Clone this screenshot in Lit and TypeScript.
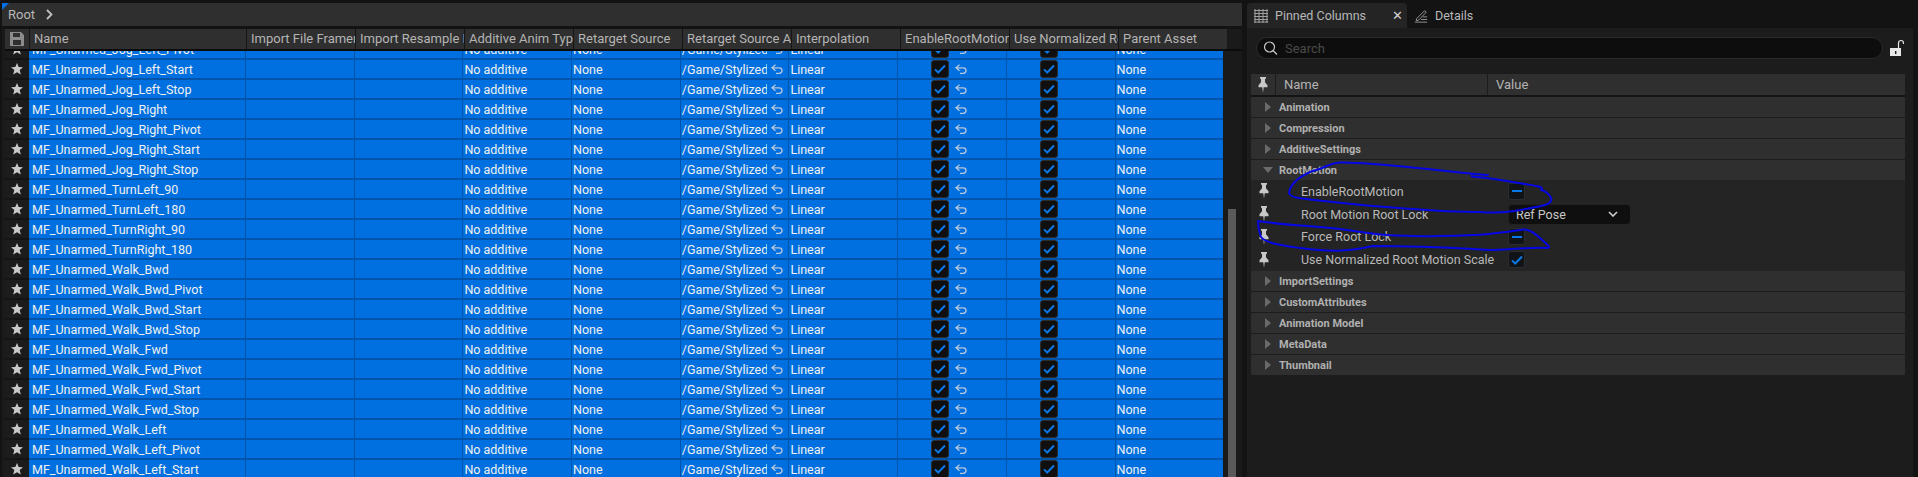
import { LitElement, html, css, svg } from "lit";
import { customElement } from "lit/decorators.js";

const NAMES = [
  "Jog_Left_Pivot","Jog_Left_Start","Jog_Left_Stop","Jog_Right","Jog_Right_Pivot","Jog_Right_Start","Jog_Right_Stop",
  "TurnLeft_90","TurnLeft_180","TurnRight_90","TurnRight_180","Walk_Bwd","Walk_Bwd_Pivot","Walk_Bwd_Start","Walk_Bwd_Stop",
  "Walk_Fwd","Walk_Fwd_Pivot","Walk_Fwd_Start","Walk_Fwd_Stop","Walk_Left","Walk_Left_Pivot","Walk_Left_Start",
].map((n) => "MF_Unarmed_" + n);

const COLS = ["Import File Framerate","Import Resample Framerate","Additive Anim Type","Retarget Source","Retarget Source Asset","Interpolation","EnableRootMotion","Use Normalized Root Motion Scale","Parent Asset"];

const star = html`<svg class="star" viewBox="0 0 12 12"><path d="M6 0 7.7 3.9 12 4.3 8.7 7.1 9.8 11.5 6 9.2 2.2 11.5 3.3 7.1 0 4.3 4.3 3.9Z"/></svg>`;
const revert = html`<svg class="revert" viewBox="0 0 12 10"><path d="M4.5 .8 1 3.8 4.5 6.8M1.2 3.8H8.2a2.8 2.8 0 0 1 0 5.6H5"/></svg>`;
const check = html`<span class="chk"><svg viewBox="0 0 12 10"><path d="M1 5.4 4.2 8.5 11 1.5"/></svg></span>`;
const checkS = html`<span class="chk small"><svg viewBox="0 0 12 10"><path d="M1 5.4 4.2 8.5 11 1.5"/></svg></span>`;
const dash = html`<span class="chk small"><i class="dash"></i></span>`;
const pin = html`<svg class="pin" viewBox="0 0 10 18"><path d="M2 1h6v1.2L7 3.2v3l2.5 3v2H5.7L5 17 4.3 11.2H.5v-2L3 6.2v-3L2 2.2Z"/></svg>`;
const tri = html`<svg class="tri" viewBox="0 0 6 10"><path d="M0 0 6 5 0 10Z"/></svg>`;

@customElement("app-root")
class AppRoot extends LitElement {
  static styles = css`
    :host { display: flex; position: relative; width: 1918px; height: 477px; overflow: hidden; background: #131313; font-family: Roboto, "Liberation Sans", sans-serif; font-size: 12px; color: #c0c0c0; }
    .left { width: 1240px; margin-left: 2px; padding-top: 3px; display: flex; flex-direction: column; flex: none; position: relative; }
    .corner { position: absolute; left: 0; top: 3px; width: 0; height: 0; border-top: 7px solid #0070e0; border-right: 7px solid transparent; }
    .crumb { height: 23px; background: #2f2f2f; display: flex; align-items: center; padding-left: 6px; gap: 11px; font-size: 13px; color: #b8b8b8; flex: none; }
    .crumb svg { width: 7px; height: 11px; fill: none; stroke: #c0c0c0; stroke-width: 1.8; }
    .table { flex: 1; margin-top: 3px; background: #1a1a1a; padding-left: 3px; display: flex; flex-direction: column; min-height: 0; position: relative; }
    .head { display: flex; height: 20px; flex: none; border-bottom: 2px solid #0c0c0c; background: #1a1a1a; }
    .hsave { width: 24px; background: #2f2f2f; display: flex; align-items: center; justify-content: center; flex: none; }
    .hsave svg { width: 14px; height: 14px; fill: #8c8c8c; }
    .hc { width: 109px; flex: none; background: #2f2f2f; border-left: 1px solid #151515; box-sizing: border-box; padding: 0 0 0 4px; line-height: 20px; white-space: nowrap; overflow: hidden; color: #b4b4b4; font-size: 13px; }
    .hc.name { width: 217px; padding-left: 4px; }
    .body { flex: 1; overflow: hidden; min-height: 0; display: flex; }
    .rows { width: 1219px; flex: none; margin-top: -11px; }
    .row { display: flex; height: 20px; }
    .starc { width: 24px; flex: none; background: #1c1c1c; border-bottom: 2px solid #141414; box-sizing: border-box; display: flex; align-items: center; justify-content: center; }
    .star { width: 12px; height: 12px; fill: #c8c8c8; }
    .c { width: 108.7px; height: 20px; flex: none; box-sizing: border-box; background: #0070e0; border-left: 1.5px solid #0055aa; border-bottom: 2px solid #0055aa; padding-left: 1px; color: #f0f0f0; white-space: nowrap; overflow: hidden; display: flex; align-items: center; font-size: 12.5px; }
    .c.name { width: 216px; border-left: 0; padding-left: 3px; }
    .c.asset span { width: 85px; overflow: hidden; flex: none; }
    .c.mid { padding-left: 33px; gap: 6px; }
    .c.mid2 { padding-left: 33.5px; }
    .revert { width: 12px; height: 10px; fill: none; stroke: #b4c6dc; stroke-width: 1.3; flex: none; }
    .asset .revert { margin-left: 4px; }
    .chk { width: 18px; height: 18px; flex: none; box-sizing: border-box; background: #0f0f0f; border: 1px solid #2c2c2c; border-radius: 3px; display: flex; align-items: center; justify-content: center; }
    .chk.small { width: 17px; height: 17px; background: #101418; }
    .chk svg { width: 12px; height: 10px; fill: none; stroke: #0a78e6; stroke-width: 2; }
    .dash { width: 10px; height: 2px; background: #0a78e6; display: block; }
    .track { width: 16px; flex: none; background: #1a1a1a; padding: 0 4px; box-sizing: border-box; display: flex; flex-direction: column; }
    .thumb { margin-top: 158px; flex: 1; background: #5a5a5a; }
    .right { width: 666px; margin-left: 5px; flex: none; display: flex; flex-direction: column; padding-top: 3px; }
    .tabs { height: 25px; display: flex; align-items: center; flex: none; }
    .tab { height: 25px; width: 160px; background: #242424; border-radius: 4px 4px 0 0; display: flex; align-items: center; box-sizing: border-box; padding-left: 7px; font-size: 12.5px; color: #b8b8b8; gap: 7px; }
    .tab .x { margin-left: 19px; font-size: 13px; color: #d0d0d0; }
    .tab2 { display: flex; align-items: center; gap: 7px; padding-left: 7px; font-size: 12.5px; color: #b8b8b8; }
    .tabs svg { width: 14px; height: 14px; flex: none; fill: none; stroke: #a0a0a0; stroke-width: 1; }
    .panel { flex: 1; background: #1c1c1c; padding: 9px 8px 0 4px; display: flex; flex-direction: column; min-height: 0; }
    .search { display: flex; align-items: center; gap: 7px; height: 22px; flex: none; margin-bottom: 15px; }
    .sbox { width: 627px; margin-left: 5px; height: 22px; box-sizing: border-box; border: 1px solid #2a2a2a; border-radius: 11px; background: #0d0d0d; display: flex; align-items: center; padding-left: 6px; gap: 7px; color: #4a4a4a; font-size: 13px; }
    .sbox svg { width: 15px; height: 16px; fill: none; stroke: #c8c8c8; stroke-width: 1.2; }
    .lock { width: 14px; height: 18px; fill: #e8e8e8; flex: none; }
    .thead { display: flex; height: 21px; background: #2f2f2f; flex: none; border-bottom: 2px solid #141414; line-height: 21px; color: #b4b4b4; font-size: 13px; }
    .thead .p { width: 24px; display: flex; align-items: center; justify-content: center; border-right: 1px solid #1c1c1c; }
    .thead .n { width: 212px; padding-left: 8px; box-sizing: border-box; border-right: 1px solid #1c1c1c; }
    .thead .v { padding-left: 8px; }
    .pin { width: 10px; height: 18px; fill: #c8c8c8; flex: none; }
    .sec { height: 20px; background: #2f2f2f; margin-bottom: 1px; display: flex; align-items: center; padding-left: 14px; gap: 8px; font-weight: 700; font-size: 11px; color: #b0b0b0; flex: none; }
    .sec .tri { width: 6px; height: 10px; fill: #6a6a6a; }
    .sec.open svg { width: 10px; height: 6px; fill: #6a6a6a; margin-left: -2px; margin-right: -2px; }
    .props { height: 91px; flex: none; display: flex; flex-direction: column; background: #242424; margin-top: -1px; }
    .prop { height: 22.75px; flex: none; display: flex; align-items: center; }
    .prop .pin { margin-left: 8px; }
    .prop .lbl { width: 239px; padding-left: 32px; box-sizing: border-box; color: #b8b8b8; font-size: 12.5px; white-space: nowrap; }
    .dd { width: 123px; height: 21px; box-sizing: border-box; background: #0f0f0f; border: 1px solid #222; border-radius: 4px; display: flex; align-items: center; justify-content: space-between; padding: 0 12px 0 7px; font-size: 12.5px; color: #c8c8c8; }
    .dd svg { width: 10px; height: 6px; fill: none; stroke: #d0d0d0; stroke-width: 1.6; }
    .ink { position: absolute; left: 0; top: 0; width: 1918px; height: 477px; pointer-events: none; fill: none; stroke: #0606e4; stroke-width: 2; stroke-linecap: round; stroke-linejoin: round; }
  `;

  private row(n: string) {
    return html`<div class="row">
      <div class="starc">${star}</div>
      <div class="c name">${n}</div>
      <div class="c"></div><div class="c"></div>
      <div class="c">No additive</div>
      <div class="c">None</div>
      <div class="c asset"><span>/Game/StylizedCharacter</span>${revert}</div>
      <div class="c">Linear</div>
      <div class="c mid">${check}${revert}</div>
      <div class="c mid2">${check}</div>
      <div class="c">None</div>
    </div>`;
  }

  private sec(t: string) {
    return html`<div class="sec">${tri}<span>${t}</span></div>`;
  }

  render() {
    return html`
      <div class="left">
        <div class="corner"></div>
        <div class="crumb"><span>Root</span><svg viewBox="0 0 7 11"><path d="M1 1l4.5 4.5L1 10"/></svg></div>
        <div class="table">
          <div class="head">
            <div class="hsave"><svg viewBox="0 0 14 14"><path d="M0 0h11l3 3v11H0ZM3 1v4h7V1ZM3 8v5h8V8Z" fill-rule="evenodd"/></svg></div>
            <div class="hc name">Name</div>
            ${COLS.map((c) => html`<div class="hc">${c}</div>`)}
          </div>
          <div class="body">
            <div class="rows">${NAMES.map((n) => this.row(n))}</div>
            <div class="track"><div class="thumb"></div></div>
          </div>
        </div>
      </div>
      <div class="right">
        <div class="tabs">
          <div class="tab">
            <svg viewBox="0 0 14 14"><path d="M0 1.5h14M0 4.5h14M0 7.5h14M0 10.5h14M0 13h14M1 0v14M5 0v14M9 0v14M13 0v14"/></svg>
            <span>Pinned Columns</span><span class="x">✕</span>
          </div>
          <div class="tab2">
            <svg viewBox="0 0 16 16"><path d="M3 11 12 2l2 1.5-8.5 9-3 1ZM1 15h14M8 12h7M10 9h5"/></svg>
            <span>Details</span>
          </div>
        </div>
        <div class="panel">
          <div class="search">
            <div class="sbox"><svg viewBox="0 0 15 15"><circle cx="6.5" cy="6.5" r="5"/><path d="M10 10l4 4"/></svg><span>Search</span></div>
            <svg class="lock" viewBox="0 0 14 18"><path d="M0 9h11v8H0Z"/><path d="M8.5 9V4a2.5 2.5 0 0 1 5 0v1" fill="none" stroke="#e8e8e8" stroke-width="1.2"/><rect x="5" y="12" width="1.4" height="3" fill="#1c1c1c"/></svg>
          </div>
          <div class="thead"><div class="p">${pin}</div><div class="n">Name</div><div class="v">Value</div></div>
          ${this.sec("Animation")}
          ${this.sec("Compression")}
          ${this.sec("AdditiveSettings")}
          <div class="sec open"><svg viewBox="0 0 10 6"><path d="M0 0h10L5 6Z"/></svg><span>RootMotion</span></div>
          <div class="props">
            <div class="prop">${pin}<div class="lbl">EnableRootMotion</div>${dash}</div>
            <div class="prop">${pin}<div class="lbl">Root Motion Root Lock</div><div class="dd"><span>Ref Pose</span><svg viewBox="0 0 10 6"><path d="M1 1l4 4 4-4"/></svg></div></div>
            <div class="prop">${pin}<div class="lbl">Force Root Lock</div>${dash}</div>
            <div class="prop">${pin}<div class="lbl">Use Normalized Root Motion Scale</div>${checkS}</div>
          </div>
          ${this.sec("ImportSettings")}
          ${this.sec("CustomAttributes")}
          ${this.sec("Animation Model")}
          ${this.sec("MetaData")}
          ${this.sec("Thumbnail")}
        </div>
      </div>
      <svg class="ink" viewBox="0 0 1918 477">${svg`
        <path d="M1488 175C1470 174 1425 168 1373 164S1340 164 1310 172C1297 178 1290 185 1289 193C1291 198 1297 198 1333 202S1440 212 1480 212C1505 214 1520 210 1541 206S1545 190 1541 190C1545 186 1535 186 1507 181S1470 177 1472 176"/>
        <path d="M1258 221C1290 226 1320 226 1347 230S1390 237 1440 236S1500 233 1520 230C1525 229 1530 229 1540 238S1550 247 1548 248C1530 247 1505 250 1490 250C1470 249 1430 246 1373 246C1345 252 1330 252 1300 248C1280 245 1265 243 1261 237C1259 232 1258 225 1258 221Z"/>
      `}</svg>
    `;
  }
}
